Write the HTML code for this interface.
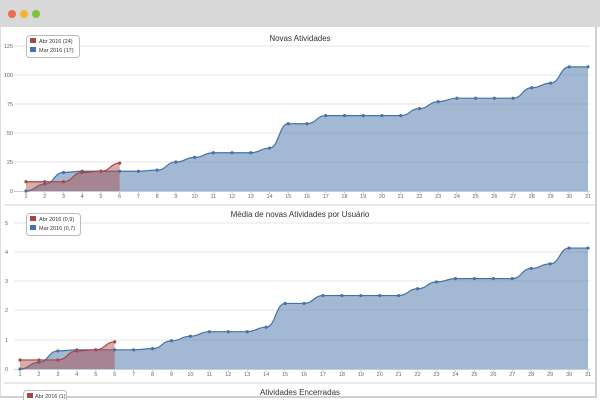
<!DOCTYPE html>
<html><head><meta charset="utf-8"><style>
html,body{margin:0;padding:0;width:600px;height:400px;overflow:hidden;background:#fff;font-family:"Liberation Sans",sans-serif}
#bar{position:absolute;left:0;top:0;width:600px;height:27px;background:#d8d8d8}
.dot{position:absolute;top:10px;width:8px;height:8px;border-radius:50%}
#frame{position:absolute;left:0;top:27px;width:597px;height:371px;border-right:2px solid #d0d0d0;border-left:1px solid #ddd;border-bottom:2px solid #d0d0d0;box-sizing:border-box}
svg{position:absolute;left:0;top:0}
text{font-family:"Liberation Sans",sans-serif}
</style></head><body>
<div id="bar"></div>
<div class="dot" style="left:8px;background:#ee6a4c"></div>
<div class="dot" style="left:20px;background:#f2b230"></div>
<div class="dot" style="left:32px;background:#7fc23d"></div>
<div id="frame"></div>
<svg width="600" height="400" id="s">
<line x1="4" y1="205" x2="595" y2="205" stroke="#e8e8e8" stroke-width="2"/>
<line x1="4" y1="383" x2="595" y2="383" stroke="#e8e8e8" stroke-width="2"/>
<g id="g1"></g><g id="g2"></g>
<g font-size="5.5" fill="#666" text-anchor="end">
<text x="13" y="48">125</text><text x="13" y="77">100</text><text x="13" y="106">75</text><text x="13" y="135">50</text><text x="13" y="164">25</text><text x="13" y="193">0</text>
<text x="8" y="225">5</text><text x="8" y="254">4</text><text x="8" y="283">3</text><text x="8" y="312">2</text><text x="8" y="342">1</text><text x="8" y="371">0</text>
</g>
<text x="300" y="41" font-size="8" fill="#333" text-anchor="middle">Novas Atividades</text>
<text x="300" y="217" font-size="8" fill="#333" text-anchor="middle">Média de novas Atividades por Usuário</text>
<text x="300" y="395" font-size="8" fill="#333" text-anchor="middle">Atividades Encerradas</text>
<g id="lbl1" font-size="5.5" fill="#666" text-anchor="middle"></g>
<g id="lbl2" font-size="5.5" fill="#666" text-anchor="middle"></g>
<rect x="26.5" y="35.5" width="53" height="22" rx="3" fill="#fff" fill-opacity="0.85" stroke="#bbb"/>
<rect x="30" y="38" width="6" height="5" fill="#aa4643"/><text x="39" y="43" font-size="5.5" fill="#333">Abr 2016 (24)</text>
<rect x="30" y="47" width="6" height="5" fill="#4572a7"/><text x="39" y="52" font-size="5.5" fill="#333">Mar 2016 (17)</text>
<rect x="26.5" y="213.5" width="54" height="22" rx="3" fill="#fff" fill-opacity="0.85" stroke="#bbb"/>
<rect x="30" y="216" width="6" height="5" fill="#aa4643"/><text x="39" y="221" font-size="5.5" fill="#333">Abr 2016 (0,9)</text>
<rect x="30" y="225" width="6" height="5" fill="#4572a7"/><text x="39" y="230" font-size="5.5" fill="#333">Mar 2016 (0,7)</text>
<rect x="23.5" y="390.5" width="43" height="12" rx="3" fill="#fff" stroke="#bbb"/>
<rect x="27" y="393" width="6" height="5" fill="#aa4643"/><text x="35" y="398" font-size="5.5" fill="#333">Abr 2016 (1)</text>
<g id="lx1"><text x="26" y="198">1</text></g>
</svg>
<script>
var NS="http://www.w3.org/2000/svg";
var blue=[0,6,16,17,17,17,17,18,25,29,33,33,33,37,58,58,65,65,65,65,65,71,77,80,80,80,80,89,93,107,107];
var red=[8,8,8,16,17,24];
function el(p,t,a){var e=document.createElementNS(NS,t);for(var k in a)e.setAttribute(k,a[k]);p.appendChild(e);return e;}
function path(pts){var d="M"+pts[0][0]+","+pts[0][1];for(var i=1;i<pts.length;i++){var a=pts[i-1],b=pts[i],m=(a[0]+b[0])/2;d+=" C"+m+","+a[1]+" "+m+","+b[1]+" "+b[0]+","+b[1];}return d;}
function chart(g,lbl,x0,x1,y0,ytop,max,grid,ly,f){
 var sx=(x1-x0)/30;
 grid.forEach(function(y){el(g,"line",{x1:14,y1:y,x2:590,y2:y,stroke:"#e6e6e6","stroke-width":1});});
 el(g,"line",{x1:14,y1:y0+0.5,x2:590,y2:y0+0.5,stroke:"#c0d0e0"});
 for(var i=0;i<31;i++){var x=x0+i*sx;el(g,"line",{x1:x,y1:y0,x2:x,y2:y0+3,stroke:"#c0d0e0"});var t=el(lbl,"text",{x:x,y:ly});t.textContent=i+1;}
 function pts(arr){return arr.map(function(v,i){return [x0+i*sx,y0-(v*f)*(y0-ytop)/max];});}
 [[blue,"#4572a7","rgba(69,114,167,0.5)"],[red,"#aa4643","rgba(170,70,67,0.45)"]].forEach(function(s){
  var p=pts(s[0]);var d=path(p);
  el(g,"path",{d:d+" L"+p[p.length-1][0]+","+y0+" L"+p[0][0]+","+y0+" Z",fill:s[2]});
  el(g,"path",{d:d,fill:"none",stroke:s[1],"stroke-width":1.2});
  p.forEach(function(q){el(g,"circle",{cx:q[0],cy:q[1],r:1.6,fill:s[1]});});
 });
}
document.getElementById("lx1").remove();
chart(document.getElementById("g1"),document.getElementById("lbl1"),26,588,191,46,125,[46,75,104,133,162],198,1);
chart(document.getElementById("g2"),document.getElementById("lbl2"),20,588,369,223,5,[223,252,281,310,340],376,0.0387);
</script>
</body></html>
